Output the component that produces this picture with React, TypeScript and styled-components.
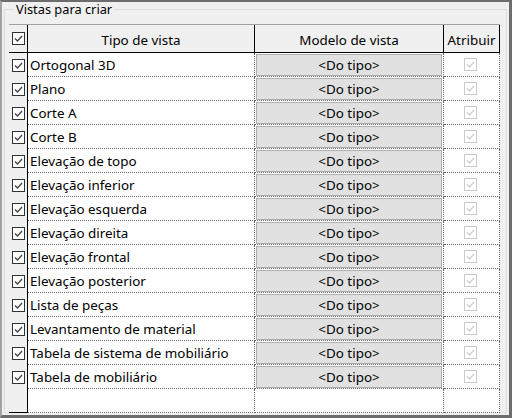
import React, { FC } from 'react'
import styled, { createGlobalStyle } from 'styled-components'

const GlobalStyle = createGlobalStyle`
    html, body {
        margin: 0;
        padding: 0;
        background: #f0f0f0;
    }
    * {
        box-sizing: border-box;
    }
`

const Window = styled.div`
    width: 512px;
    height: 418px;
    background: #f0f0f0;
    border-top: 2px solid #6d6d6d;
    border-right: 3px solid #6d6d6d;
    border-bottom: 3px solid #6d6d6d;
    border-left: 2px solid #a3a3a3;
    padding: 0 2px 2px 2px;
    font-family: 'Noto Sans', 'Open Sans', sans-serif;
    font-size: 13.4px;
    color: #000;
`

const Group = styled.fieldset`
    margin: 0;
    height: 100%;
    border: 1px solid #dcdcdc;
    padding: 7px 2px 0 4px;
    min-width: 0;
`

const Legend = styled.legend`
    padding: 0 2px;
    margin-left: 5px;
    font-size: 12.8px;
    line-height: 15px;
`

const Grid = styled.div`
    display: grid;
    grid-template-columns: 19px 227px 189px 56px;
    grid-auto-rows: 24px;
    grid-template-rows: 28px;
    border-top: 1px solid #a0a0a0;
    background: #fff;
    width: 491px;
`

const Corner = styled.div`
    background: #f0f0f0;
    border-right: 1px solid #000;
    border-bottom: 1px solid #000;
    display: flex;
    align-items: center;
    justify-content: center;
`

const HeadCell = styled.div`
    background: #f0f0f0;
    border-right: 1px solid #000;
    border-bottom: 1px solid #000;
    display: flex;
    align-items: center;
    justify-content: center;
    padding-top: 2px;
    white-space: nowrap;
`

const RowHead = styled.div<{ $last?: boolean }>`
    background: #f0f0f0;
    border-right: 1px solid #000;
    border-bottom: ${p => (p.$last ? '1px solid #000' : 'none')};
    display: flex;
    align-items: center;
    justify-content: center;
`

const Cell = styled.div<{ $center?: boolean }>`
    border-right: 1px dotted #6a6a6a;
    border-bottom: 1px dotted #6a6a6a;
    display: flex;
    align-items: center;
    justify-content: ${p => (p.$center ? 'center' : 'flex-start')};
    padding-left: 2px;
    padding-right: ${p => (p.$center ? '4px' : '0')};
    white-space: nowrap;
    overflow: hidden;
`

const ButtonCell = styled.div`
    border-right: 1px dotted #6a6a6a;
    border-bottom: 1px dotted #6a6a6a;
    padding: 1px 1px 0 1px;
    display: flex;
`

const TypeButton = styled.div`
    flex: 1;
    background: #e1e1e1;
    border: 1px solid #adadad;
    display: flex;
    align-items: center;
    justify-content: center;
    padding-bottom: 1px;
`

const Box = styled.span<{ $disabled?: boolean }>`
    width: 13px;
    height: 13px;
    border: 1px solid ${p => (p.$disabled ? '#cccccc' : '#333333')};
    background: #ffffff;
    display: flex;
    align-items: center;
    justify-content: center;
`

const Check: FC<{ disabled?: boolean }> = ({ disabled }) => (
    <Box $disabled={disabled}>
        <svg width="11" height="11" viewBox="0 0 11 11">
            <polyline
                points="2,5.5 4.5,8 9,3"
                fill="none"
                stroke={disabled ? '#cfcfcf' : '#444444'}
                strokeWidth="1.4"
            />
        </svg>
    </Box>
)

const views = [
    'Ortogonal 3D',
    'Plano',
    'Corte A',
    'Corte B',
    'Elevação de topo',
    'Elevação inferior',
    'Elevação esquerda',
    'Elevação direita',
    'Elevação frontal',
    'Elevação posterior',
    'Lista de peças',
    'Levantamento de material',
    'Tabela de sistema de mobiliário',
    'Tabela de mobiliário',
]

const App: FC = () => {
    return (
        <>
            <GlobalStyle />
            <Window>
                <Group>
                    <Legend>Vistas para criar</Legend>
                    <Grid>
                        <Corner>
                            <Check />
                        </Corner>
                        <HeadCell>Tipo de vista</HeadCell>
                        <HeadCell>Modelo de vista</HeadCell>
                        <HeadCell>Atribuir</HeadCell>
                        {views.map(v => (
                            <React.Fragment key={v}>
                                <RowHead>
                                    <Check />
                                </RowHead>
                                <Cell>{v}</Cell>
                                <ButtonCell>
                                    <TypeButton>&lt;Do tipo&gt;</TypeButton>
                                </ButtonCell>
                                <Cell $center>
                                    <Check disabled />
                                </Cell>
                            </React.Fragment>
                        ))}
                        <RowHead $last />
                        <Cell />
                        <Cell />
                        <Cell />
                    </Grid>
                </Group>
            </Window>
        </>
    )
}

export default App
